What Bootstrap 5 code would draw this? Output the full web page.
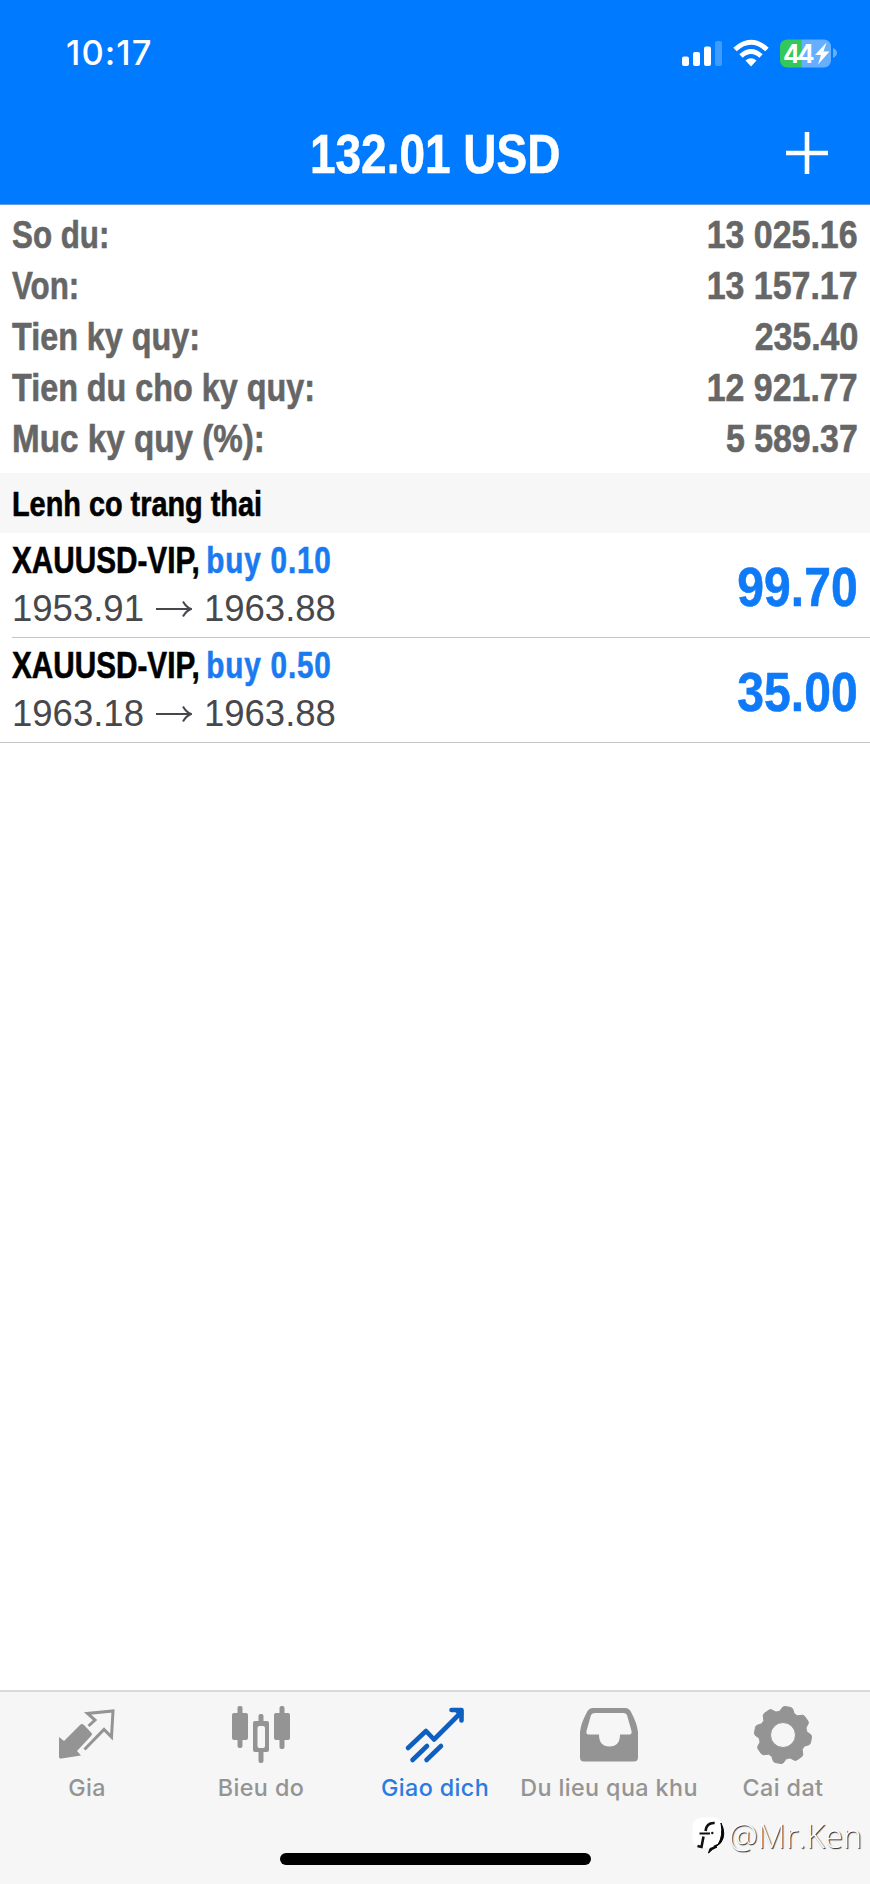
<!DOCTYPE html>
<html lang="vi">
<head>
<meta charset="utf-8">
<meta name="viewport" content="width=device-width, initial-scale=1">
<title>Giao dich</title>
<link href="https://cdn.jsdelivr.net/npm/bootstrap@5.3.0/dist/css/bootstrap.min.css" rel="stylesheet">
<style>
  body { font-family: "Liberation Sans", Arial, sans-serif; background: #fff; }
  .app { height: 1884px; overflow: hidden; }
  /* condensed bold: Liberation Sans squeezed horizontally, stems thickened a little */
  .cond { font-weight: 700; white-space: nowrap; transform: scaleX(var(--sx, .829)); transform-origin: left center; -webkit-text-stroke: .6px currentColor; }
  .cond-end { transform-origin: right center; }
  .topbar { background: #007aff; height: 205px; border-bottom: 1px solid #5f9ce6; }
  .status { height: 106px; padding: 0 33px 0 66px; }
  .clock { font: 500 34.5px/1 Inter, sans-serif; letter-spacing: 1.1px; }
  .title-row { display: grid; grid-template-columns: 1fr auto 1fr; height: 94px; padding-right: 42px; padding-left: 42px; }
  .title-row h1 { --sx: .828; font-size: 55.5px; line-height: 96px; transform-origin: center; }
  .title-row svg { margin-bottom: 3px; }
  .summary { height: 268px; padding: 4px 12px 0; color: #666; }
  .summary .line { height: 51px; font-size: 39px; line-height: 51px; }
  .summary .line:nth-child(-n+2) .cond { --sx: .803; }
  .summary .line:nth-child(5) .cond { --sx: .852; }
  .summary .line .cond-end.cond { --sx: .869; }
  .section-head { height: 60px; background: #f7f7f7; padding-left: 12px; font-size: 34.5px; line-height: 62px; color: #000; }
  .section-head .cond { --sx: .836; display: inline-block; }
  .deal { height: 105px; margin-left: 12px; padding-right: 12px; border-bottom: 1px solid #c4c4c8; }
  .deal:last-child { margin-left: 0; padding-left: 12px; }
  .deal .sym { --sx: .803; font-size: 37px; line-height: 48px; padding-top: 4px; color: #000; }
  .buy { color: #1a7af0; letter-spacing: 1px; margin-left: -2px; }
  .deal .price { font-size: 36.5px; line-height: 48px; color: #48484c; }
  .deal .price svg { margin: 0 12px 0 12px; }
  .deal .pnl { --sx: .874; font-size: 55px; line-height: 108px; color: #0f7af8; }
  .tabs { height: 194px; background: #f6f6f6; border-top: 2px solid #dadada; }
  .tabs .tab { width: 174px; color: #949494; font: 450 23.3px/28px Inter, sans-serif; letter-spacing: .4px; white-space: nowrap; padding-top: 10px; }
  .tabs .tab.on { color: #2b7ce0; }
  .tab svg { display: block; margin-bottom: 12px; }
  .home-bar { width: 311px; height: 12px; border-radius: 6px; background: #000; left: 280px; bottom: 19px; }
  .credit { right: 8px; bottom: 28px; color: #fff; font: 300 32.5px/40px "Open Sans", sans-serif; text-shadow: 1px 1px 1px #222; }
</style>
</head>
<body>
<div class="app d-flex flex-column position-relative">
  <header class="topbar text-white flex-shrink-0">
    <div class="status d-flex justify-content-between align-items-center">
      <span class="clock">10:17</span>
      <svg width="158" height="30" viewBox="0 0 158 30" fill="#fff">
        <rect x="3" y="18.500" width="7" height="9.500" rx="2"/><rect x="14" y="14" width="7" height="14" rx="2"/><rect x="25" y="8.500" width="7" height="19.500" rx="2"/><rect x="36" y="3" width="7" height="25" rx="2" opacity=".25"/>
        <g fill="none" stroke="#fff" stroke-width="5"><path d="M56 11.500Q72 -3 88 11.500"/><path d="M62 18Q72 9 82 18"/></g>
        <path d="M66.500 22.500Q72 18 77.500 22.500L72 28.500z"/>
        <path d="M108 1.500h14.500v28H108a7 7 0 0 1-7-7v-14a7 7 0 0 1 7-7z" fill="#34c759"/>
        <path d="M122.500 1.500H145a7 7 0 0 1 7 7v14a7 7 0 0 1-7 7h-22.500z" opacity=".4"/><path d="M154 10q4 2 4 5t-4 5z" opacity=".4"/>
        <text x="104" y="24.500" font-family="Inter, sans-serif" font-weight="700" font-size="25.500" textLength="31.500">44</text>
        <path d="M147.500 4.500L136 17h6L139 26.500 150.500 13.500h-6z"/>
      </svg>
    </div>
    <div class="title-row align-items-center">
      <span></span>
      <h1 class="cond m-0">132.01 USD</h1>
      <svg class="ms-auto" width="42" height="42" viewBox="0 0 42 42"><path d="M21 0v42M0 21h42" stroke="#fff" stroke-width="4.600"/></svg>
    </div>
  </header>
  <section class="summary flex-shrink-0">
    <div class="line d-flex justify-content-between"><span class="cond">So du:</span><span class="cond cond-end">13 025.16</span></div>
    <div class="line d-flex justify-content-between"><span class="cond">Von:</span><span class="cond cond-end">13 157.17</span></div>
    <div class="line d-flex justify-content-between"><span class="cond">Tien ky quy:</span><span class="cond cond-end">235.40</span></div>
    <div class="line d-flex justify-content-between"><span class="cond">Tien du cho ky quy:</span><span class="cond cond-end">12 921.77</span></div>
    <div class="line d-flex justify-content-between"><span class="cond">Muc ky quy (%):</span><span class="cond cond-end">5 589.37</span></div>
  </section>
  <h2 class="section-head m-0 flex-shrink-0"><span class="cond">Lenh co trang thai</span></h2>
  <main class="flex-grow-1">
    <div class="deal d-flex justify-content-between">
      <div><div class="sym cond">XAUUSD-VIP, <span class="buy">buy 0.10</span></div>
      <div class="price d-flex align-items-center"><span>1953.91</span><svg width="36" height="18" viewBox="0 0 36 18" fill="none" stroke="currentColor" stroke-width="2"><path d="M0 9h35M27 1.500Q30 7 35 9 30 11 27 16.500"/></svg><span>1963.88</span></div></div>
      <div class="pnl cond cond-end">99.70</div>
    </div>
    <div class="deal d-flex justify-content-between">
      <div><div class="sym cond">XAUUSD-VIP, <span class="buy">buy 0.50</span></div>
      <div class="price d-flex align-items-center"><span>1963.18</span><svg width="36" height="18" viewBox="0 0 36 18" fill="none" stroke="currentColor" stroke-width="2"><path d="M0 9h35M27 1.500Q30 7 35 9 30 11 27 16.500"/></svg><span>1963.88</span></div></div>
      <div class="pnl cond cond-end">35.00</div>
    </div>
  </main>
  <nav class="tabs d-flex flex-shrink-0">
    <div class="tab d-flex flex-column align-items-center">
      <svg width="60" height="60" viewBox="0 0 60 60"><path d="M2 35l5 4L23.500 22.500Q25 21.500 27 23L34.500 31Q36 32.500 34 34L20 49l4 4.500L4.500 56.500Q2 57 2 55z" fill="currentColor"/><path d="M31.500 24L38 18l-7.500-6.500L56 9l-1.500 26L47 27.500 27.500 47.500" fill="none" stroke="currentColor" stroke-width="3"/></svg>
      <span>Gia</span></div>
    <div class="tab d-flex flex-column align-items-center">
      <svg width="60" height="60" viewBox="0 0 60 60" fill="currentColor" overflow="visible"><rect x="6.500" y="4" width="5" height="42" rx="2"/><rect x="1" y="11" width="16" height="27" rx="2"/><rect x="48.500" y="4" width="5" height="43" rx="2"/><rect x="43" y="11" width="16" height="27" rx="2"/><rect x="27.500" y="12" width="5" height="49" rx="2"/><rect x="22" y="19" width="16" height="31" rx="2"/><rect x="26.500" y="24" width="7.500" height="22" rx="2" fill="#f6f6f6"/></svg>
      <span>Bieu do</span></div>
    <div class="tab on d-flex flex-column align-items-center">
      <svg width="60" height="60" viewBox="0 0 60 60" fill="none" stroke="#0f5fc0" stroke-width="4.600" stroke-linecap="round" stroke-linejoin="round" overflow="visible"><path d="M3 46L21 29l8 8.500L55 11.500M46.500 8H56.500V18.500M7.500 58L22 44M21.500 58L36 44"/><path d="M52 8.500h4v4.500z"/></svg>
      <span>Giao dich</span></div>
    <div class="tab d-flex flex-column align-items-center">
      <svg width="60" height="60" viewBox="0 0 60 60" fill="currentColor"><path fill-rule="evenodd" d="M14 6H46Q50 6 52 10Q58 21 59 30V55.500Q59 59.500 55 59.500H5Q1 59.500 1 55.500V30Q2 21 8 10Q10 6 14 6zM16 11Q13 11 12 13L7.500 29Q7 32.500 9.500 32.500H20Q20 44.500 30.500 44.500T41 32.500H50.500Q53 32.500 52.500 29L48 13Q47 11 44 11z"/></svg>
      <span>Du lieu qua khu</span></div>
    <div class="tab d-flex flex-column align-items-center">
      <svg width="60" height="60" viewBox="-30 -33 60 60" fill="currentColor" stroke="currentColor" stroke-width="1" stroke-linejoin="round" overflow="visible"><path id="gear" fill-rule="evenodd"/></svg>
      <span>Cai dat</span></div>
  </nav>
  <div class="home-bar position-absolute"></div>
  <div class="credit position-absolute d-flex align-items-center">
    <svg class="me-1" width="35" height="38" viewBox="0 0 35 38"><rect x="2.500" y=".5" width="30" height="30" rx="9" fill="#fff"/><path d="M31 6Q36.500 17 31 25.500Q28 29.500 20 31.500L18.500 36Q22 32 27 30Q20 30 28 27.500Q33.500 19 31 6z" fill="#000" stroke="#000"/><path d="M24.700 6Q16.500 5.500 15.500 14M13.500 19.500L11.500 30L7.500 29" fill="none" stroke="#111" stroke-width="2.600"/><path d="M9.500 16.500H20" stroke="#111" stroke-width="2"/><circle cx="22.300" cy="16" r="1.200" fill="#111"/></svg>
    <span>@Mr.Ken</span>
  </div>
</div>
<script>
  // Eight-tooth gear outline around the origin
  var pts = [], n = 8, a0 = -80;
  for (var i = 0; i < n; i++) {
    [[-18, 24], [-10, 28], [-6, 28.6], [6, 28.6], [10, 28], [18, 24]].forEach(function (p) {
      var a = (a0 + i * 45 + p[0]) * Math.PI / 180;
      pts.push((p[1] * Math.cos(a)).toFixed(2) + ' ' + (p[1] * Math.sin(a)).toFixed(2));
    });
  }
  document.getElementById('gear').setAttribute('d', 'M' + pts.join('L') + 'zM12.500 0A12.500 12.500 0 1 0-12.500 0A12.500 12.500 0 1 0 12.500 0z');
</script>
<script src="https://cdn.jsdelivr.net/npm/bootstrap@5.3.0/dist/js/bootstrap.bundle.min.js"></script>
</body>
</html>
